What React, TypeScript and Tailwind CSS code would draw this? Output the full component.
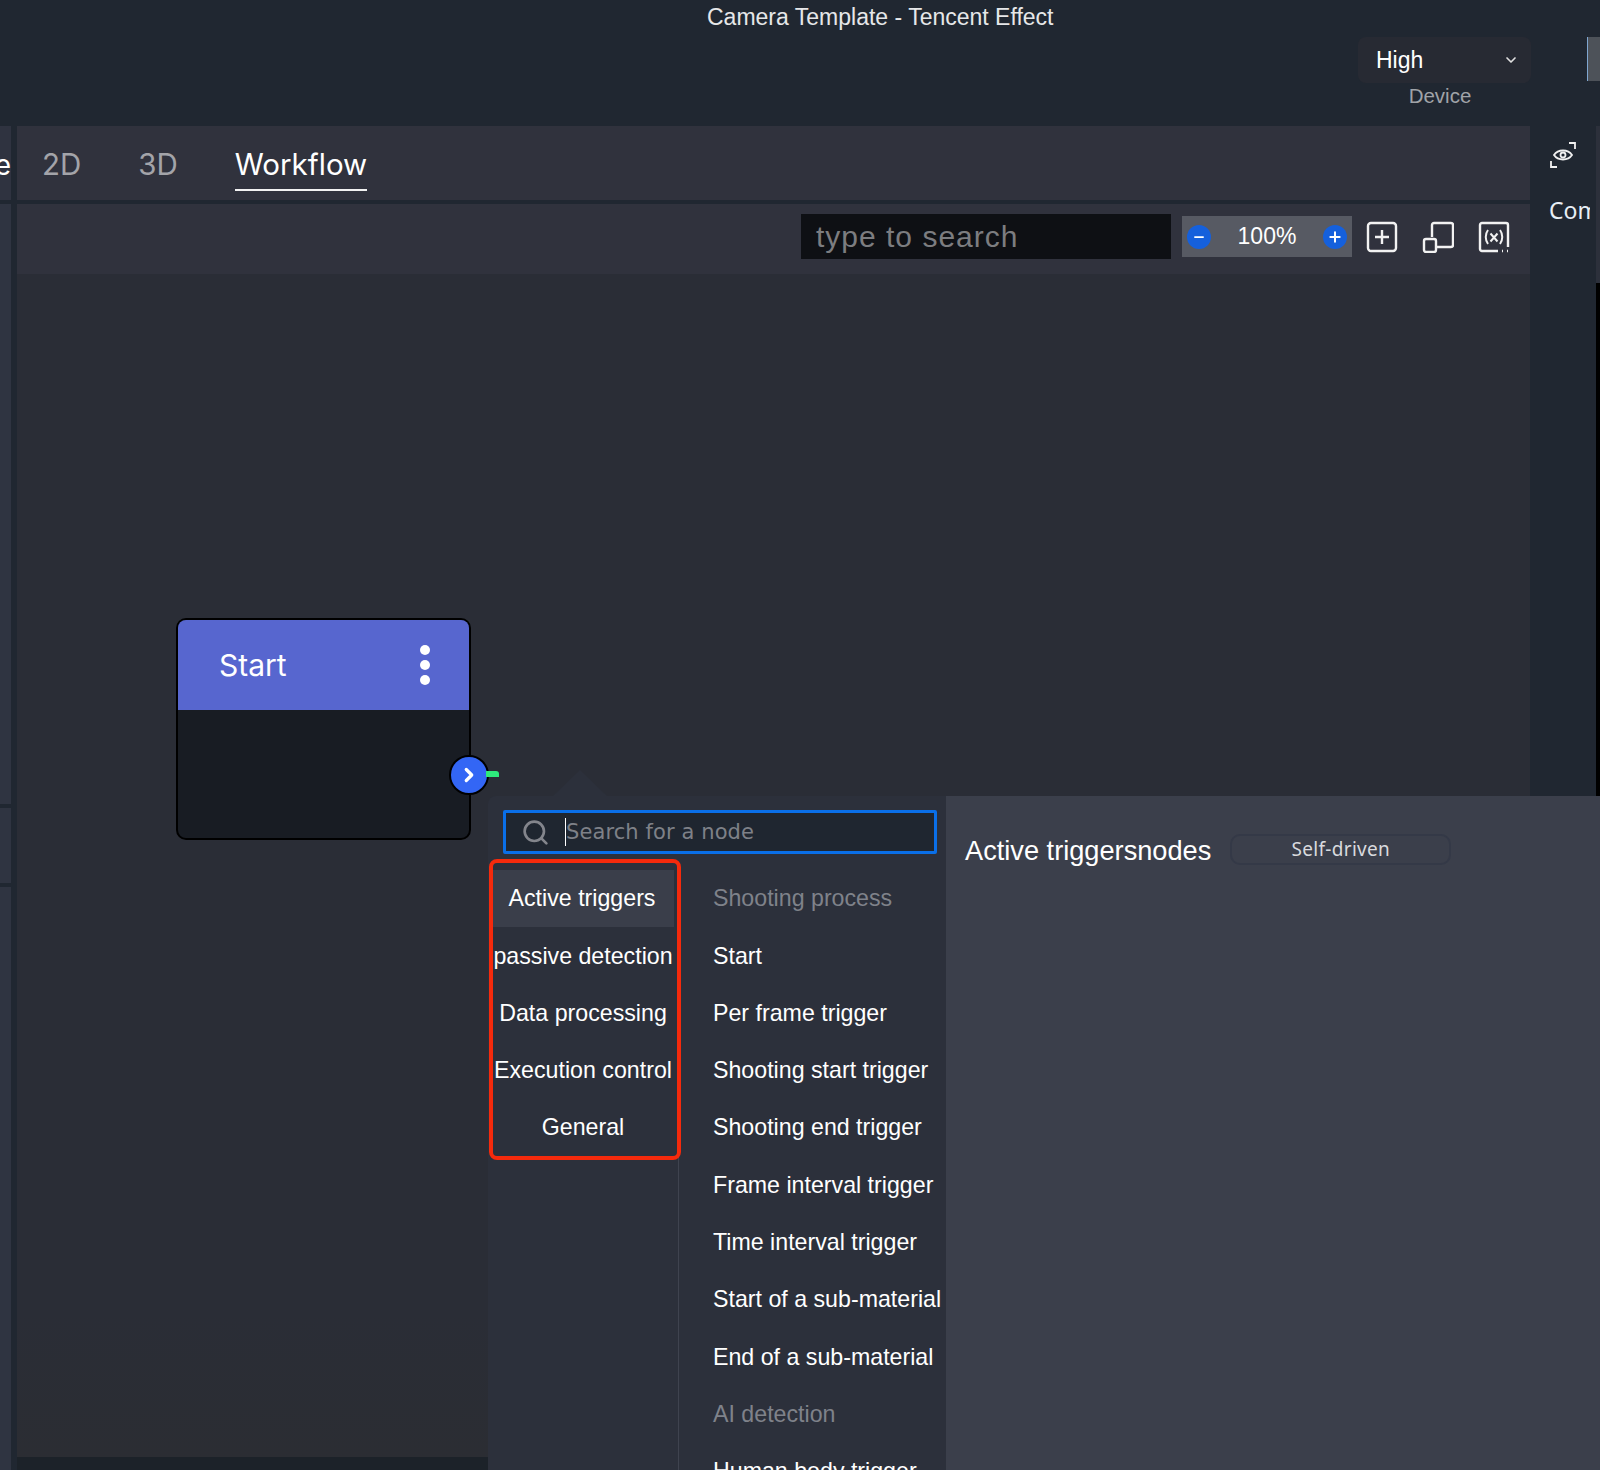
import { ChevronDown, ChevronRight, Minus, Plus, Search } from "lucide-react"

const categories = ["Active triggers", "passive detection", "Data processing", "Execution control", "General"]

const nodes = [
  { label: "Shooting process", heading: true },
  { label: "Start" },
  { label: "Per frame trigger" },
  { label: "Shooting start trigger" },
  { label: "Shooting end trigger" },
  { label: "Frame interval trigger" },
  { label: "Time interval trigger" },
  { label: "Start of a sub-material" },
  { label: "End of a sub-material" },
  { label: "AI detection", heading: true },
  { label: "Human body trigger" },
]

function LeftStrip() {
  return (
    <div className="flex h-full w-[11px] shrink-0 flex-col">
      <div className="flex h-[74px] items-center justify-end overflow-hidden bg-[#2f3340] pt-[3px]">
        <span className="font-['Inter',sans-serif] text-[28px] leading-none text-white">e</span>
      </div>
      <div className="mt-[4px] h-[600px] bg-[#2f3441]" />
      <div className="mt-[4px] h-[75px] bg-[#2f3441]" />
      <div className="mt-[4px] flex-1 bg-[#2f3441]" />
    </div>
  )
}

function AddBoxIcon() {
  return (
    <svg width="32" height="32" viewBox="0 0 32 32" fill="none" stroke="#f2f2f2" strokeWidth="2.4" className="shrink-0">
      <rect x="2" y="2" width="28" height="28" rx="3" />
      <path d="M16 9v14M9 16h14" />
    </svg>
  )
}

function ResizeIcon() {
  return (
    <svg width="32" height="32" viewBox="0 0 32 32" fill="none" stroke="#f2f2f2" strokeWidth="2.4" className="shrink-0">
      <path d="M10 16V4a2 2 0 0 1 2-2h17a2 2 0 0 1 2 2v20a2 2 0 0 1-2 2H15" />
      <rect x="2" y="18" width="12" height="13" rx="2" />
    </svg>
  )
}

function VariableIcon() {
  return (
    <svg width="32" height="32" viewBox="0 0 32 32" fill="none" stroke="#f2f2f2" strokeWidth="2.4" className="shrink-0">
      <path d="M20 30H4a2 2 0 0 1-2-2V4a2 2 0 0 1 2-2h24a2 2 0 0 1 2 2v22" />
      <path d="M24 30h1M29 30h1" />
      <path d="M10 9c-3 4-3 10 0 14M22 9c3 4 3 10 0 14M12.500 12.500l7 8M19.500 12.500l-7 8" strokeWidth="2" />
    </svg>
  )
}

function EyeFrameIcon() {
  return (
    <svg width="28" height="28" viewBox="0 0 28 28" fill="none" stroke="#f0f0f0" strokeWidth="1.800">
      <path d="M20 2h6v6M2 20v6h6" />
      <path d="M5 14c4-6 14-6 18 0-4 6-14 6-18 0Z" />
      <circle cx="14" cy="14" r="2.500" />
    </svg>
  )
}

function Toolbar() {
  return (
    <div className="mt-[4px] flex h-[70px] items-center bg-[#30323d] pb-[5px] pl-[784px]">
      <div className="flex h-[45px] w-[370px] items-center bg-[#0e1014] pl-[15px] font-['Liberation_Sans',sans-serif] text-[30px] tracking-[1px] text-[#7c7d80]">
        type to search
      </div>
      <div className="ml-[11px] flex h-[41px] w-[170px] items-center justify-between bg-[#575a63] px-[5px]">
        <span className="flex h-[24px] w-[24px] items-center justify-center rounded-full bg-[#1560dc]">
          <Minus size={14} color="#fff" strokeWidth={3} />
        </span>
        <span className="font-['Liberation_Sans',sans-serif] text-[23px] text-white">100%</span>
        <span className="flex h-[24px] w-[24px] items-center justify-center rounded-full bg-[#1560dc]">
          <Plus size={16} color="#fff" strokeWidth={3} />
        </span>
      </div>
      <div className="ml-[14px] flex gap-[24px]">
        <AddBoxIcon />
        <ResizeIcon />
        <VariableIcon />
      </div>
    </div>
  )
}

function StartNode() {
  return (
    <div className="absolute left-[159px] top-[344px] h-[222px] w-[295px] rounded-[10px] border-2 border-black bg-[#181c23]">
      <div className="flex h-[90px] items-center justify-between rounded-t-[8px] bg-[#5766cf] pl-[41px] pr-[39px]">
        <span className="font-['Inter',sans-serif] text-[30px] text-white">Start</span>
        <span className="flex flex-col gap-[5px]">
          <span className="h-[10px] w-[10px] rounded-full bg-white" />
          <span className="h-[10px] w-[10px] rounded-full bg-white" />
          <span className="h-[10px] w-[10px] rounded-full bg-white" />
        </span>
      </div>
      <div className="absolute left-[271px] top-[135px] flex h-[40px] w-[40px] items-center justify-center rounded-full border-2 border-black bg-[#3366f5]">
        <ChevronRight size={22} color="#fff" strokeWidth={3.5} />
      </div>
      <div className="absolute left-[308px] top-[151px] h-[6px] w-[13px] rounded-tr-[3px] bg-[#2eea7c]" />
    </div>
  )
}

function NodePicker() {
  return (
    <div className="absolute left-[488px] top-[796px] flex h-[674px] w-[1112px]">
      <div className="absolute left-[65px] top-[-26px] h-0 w-0 border-x-[27px] border-b-[26px] border-x-transparent border-b-[#2c303b]" />
      <div className="w-[458px] shrink-0 overflow-hidden rounded-tl-[8px] bg-[#2c303b] font-['Liberation_Sans',sans-serif] text-[23.2px]">
        <div className="ml-[15px] mt-[14px] flex h-[44px] w-[434px] items-center rounded-[2px] border-[3px] border-[#0a6fe8] bg-[#1f2630] pl-[15px]">
          <Search size={29} color="#83858c" strokeWidth={2.2} className="shrink-0" />
          <span className="ml-[15px] h-[28px] w-[1px] bg-white" />
          <span className="pt-[1px] font-['DejaVu_Sans',sans-serif] text-[21px] tracking-[0.1px] text-[#7e8188]">Search for a node</span>
        </div>
        <div className="mt-[16px] flex h-[620px]">
          <div className="h-full w-[191px] shrink-0 border-r border-[#3f434f]">
            {categories.map((c, i) => (
              <div
                key={c}
                className={
                  "flex h-[57.3px] items-center justify-center whitespace-nowrap text-white " +
                  (i === 0 ? "ml-[2px] mr-[4px] bg-[#3a3e4a]" : "")
                }
              >
                {c}
              </div>
            ))}
          </div>
          <div className="flex-1 pl-[34px]">
            {nodes.map(n => (
              <div
                key={n.label}
                className={"flex h-[57.3px] items-center whitespace-nowrap " + (n.heading ? "text-[#7f828a]" : "text-white")}
              >
                {n.label}
              </div>
            ))}
          </div>
        </div>
      </div>
      <div className="flex h-full flex-1 items-start gap-[19px] bg-[#3b3f4b] pl-[19px] pt-[38px]">
        <span className="font-['Liberation_Sans',sans-serif] text-[27.2px] leading-[34px] text-white">Active triggersnodes</span>
        <span className="flex h-[31px] w-[221px] items-center justify-center rounded-[10px] border-2 border-[#343947] font-['Noto_Sans',sans-serif] text-[19px] tracking-[0.3px] text-[#d9dade]">
          Self-driven
        </span>
      </div>
      <div className="absolute left-[1px] top-[63px] h-[301px] w-[192px] rounded-[8px] border-[4px] border-[#f52a0c]" />
    </div>
  )
}

export default function App() {
  return (
    <div className="relative flex h-[1470px] w-[1600px] flex-col overflow-hidden bg-[#202731]">
      <header className="relative h-[126px] shrink-0">
        <div className="pt-[4px] pl-[707px] font-['Liberation_Sans',sans-serif] text-[23px] leading-[26px] text-[#e6e7e9]">
          Camera Template - Tencent Effect
        </div>
        <div className="ml-[1358px] mt-[7px] flex h-[46px] w-[173px] items-center justify-between rounded-[8px] bg-[#272a33] pl-[18px] pr-[12px] font-['Liberation_Sans',sans-serif] text-[23px] text-white">
          High
          <ChevronDown size={16} color="#e0e0e0" strokeWidth={2.5} />
        </div>
        <div className="ml-[1358px] w-[164px] text-center font-['Liberation_Sans',sans-serif] text-[20.5px] leading-[26px] text-[#a0a3a8]">
          Device
        </div>
        <div className="absolute left-[1587px] top-[37px] h-[44px] w-[13px] border-l border-[#7fa6d0] bg-[#4d5259]" />
      </header>
      <div className="flex flex-1">
        <LeftStrip />
        <main className="ml-[6px] flex w-[1513px] shrink-0 flex-col">
          <div className="flex h-[74px] items-center gap-[57px] bg-[#30323d] pl-[25px] pt-[3px] font-['Inter',sans-serif] text-[29.5px] text-[#a3a4a9]">
            <span>2D</span>
            <span>3D</span>
            <span className="relative text-white">
              Workflow
              <span className="absolute bottom-[-4px] left-0 h-[2px] w-full bg-[#f2f2f2]" />
            </span>
          </div>
          <Toolbar />
          <div className="relative flex-1 bg-gradient-to-b from-[#2a2d36] via-[#2a2d36] via-[88%] to-[#2b2d33]">
            <StartNode />
          </div>
          <div className="h-[13px] bg-[#1c2229]" />
        </main>
        <aside className="flex w-[66px] shrink-0 flex-col items-start pl-[19px] pt-[15px]">
          <EyeFrameIcon />
          <div className="mt-[27px] w-[41px] overflow-hidden whitespace-nowrap font-['Noto_Sans',sans-serif] text-[23px] leading-[28px] text-[#e8eef5]">
            Common
          </div>
        </aside>
        <div className="flex w-[4px] shrink-0 flex-col">
          <div className="h-[157px] bg-[#2c303b]" />
          <div className="flex-1 bg-black" />
        </div>
      </div>
      <NodePicker />
    </div>
  )
}
